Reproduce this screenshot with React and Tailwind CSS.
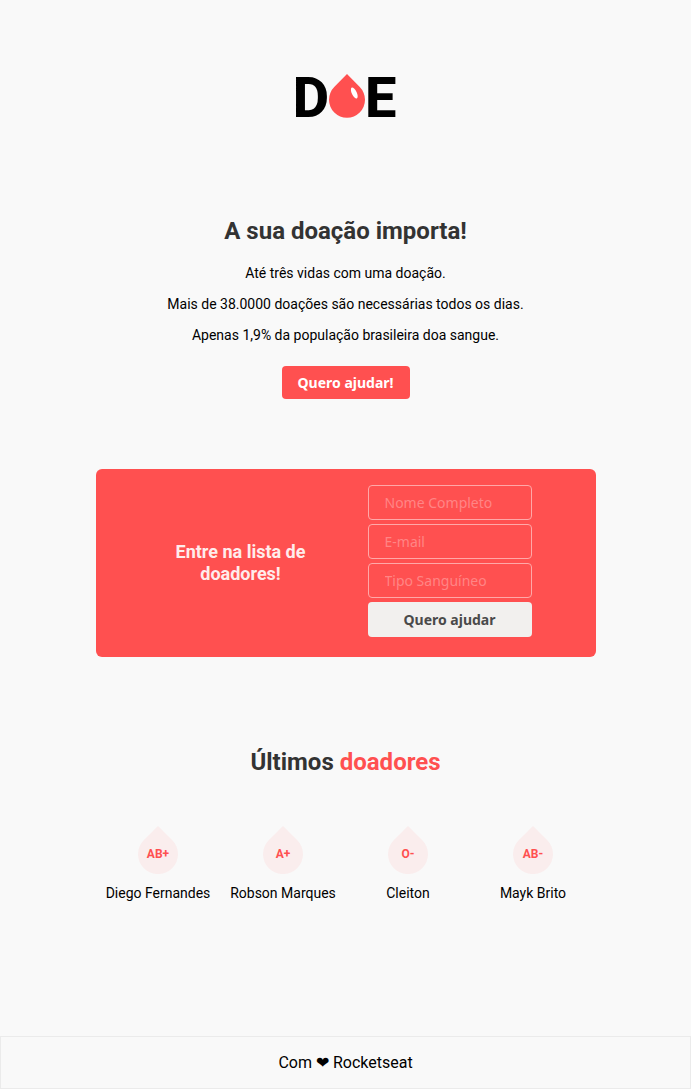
const donors = [
  { name: 'Diego Fernandes', blood: 'AB+' },
  { name: 'Robson Marques', blood: 'A+' },
  { name: 'Cleiton', blood: 'O-' },
  { name: 'Mayk Brito', blood: 'AB-' },
];

const fields = [
  { name: 'name', type: 'text', label: 'Nome Completo' },
  { name: 'email', type: 'email', label: 'E-mail' },
  { name: 'blood', type: 'text', label: 'Tipo Sanguíneo' },
];

function Logo() {
  return (
    <div className="flex items-end justify-center pr-0.5 text-[56px] leading-[68px] font-extrabold text-black">
      <span>D</span>
      <svg className="mb-3.5 h-11 w-9" viewBox="0 0 36 44" aria-label="O" role="img">
        <path
          d="M18 0 L30.8 13.1 A18 18 0 1 1 5.2 13.1 Z"
          fill="#ff5050"
        />
        <ellipse cx="25.3" cy="19" rx="2.5" ry="6" transform="rotate(-25 25.3 19)" fill="#fff" />
      </svg>
      <span>E</span>
    </div>
  );
}

function Donor({ name, blood }) {
  return (
    <li className="flex flex-col items-center gap-[11px]">
      <div className="grid h-12 w-10 place-items-center">
        <svg className="col-start-1 row-start-1 h-12 w-10" viewBox="0 0 40 48" aria-hidden="true">
          <path d="M20 0 L34.1 13.9 A20 20 0 1 1 5.9 13.9 Z" fill="#faeded" />
        </svg>
        <span className="col-start-1 row-start-1 pt-2 text-xs font-bold text-[#ff5050]">{blood}</span>
      </div>
      <p className="text-sm leading-4 whitespace-nowrap">{name}</p>
    </li>
  );
}

export default function App() {
  return (
    <div className="flex min-h-screen flex-col bg-[#f9f9f9] font-[Roboto,sans-serif] text-black">
      <header className="pt-16">
        <Logo />
      </header>

      <main className="mx-auto flex w-full max-w-[500px] grow flex-col">
        <section className="mt-[85px] flex flex-col items-center text-center">
          <h1 className="text-2xl leading-7 font-bold text-[#333]">A sua doação importa!</h1>
          <div className="mt-5 flex flex-col gap-[15px] text-sm leading-4">
            <p>Até três vidas com uma doação.</p>
            <p>Mais de 38.0000 doações são necessárias todos os dias.</p>
            <p>Apenas 1,9% da população brasileira doa sangue.</p>
          </div>
          <button
            type="button"
            className="mt-[23px] rounded bg-[#ff5050] px-4 py-2 font-['Noto_Sans',sans-serif] text-sm leading-[17px] font-bold text-white"
          >
            Quero ajudar!
          </button>
        </section>

        <section className="mt-[70px] flex flex-wrap items-center justify-between gap-4 rounded-md bg-[#ff5050] px-16 py-4">
          <h2 className="w-[162px] text-center text-lg leading-[22px] font-bold text-[#ffecec]">
            Entre na lista de doadores!
          </h2>
          <form className="flex w-[164px] flex-col gap-1 pb-1 font-['Noto_Sans',sans-serif]" onSubmit={(e) => e.preventDefault()}>
            {fields.map((f) => (
              <input
                key={f.name}
                type={f.type}
                name={f.name}
                aria-label={f.label}
                placeholder={f.label}
                className="h-[35px] w-full rounded border border-[#ffa8a8] bg-transparent px-4 text-sm text-white placeholder:text-[#ff8585]"
              />
            ))}
            <button type="submit" className="h-[35px] rounded bg-[#f2f0ee] text-sm font-bold text-[#4a4a4a]">
              Quero ajudar
            </button>
          </form>
        </section>

        <section className="mt-[91px] pb-[132px]">
          <h2 className="text-center text-2xl leading-7 font-bold text-[#333]">
            Últimos <span className="text-[#ff5050]">doadores</span>
          </h2>
          <ul className="mt-[50px] grid grid-cols-4">
            {donors.map((d) => (
              <Donor key={d.name} {...d} />
            ))}
          </ul>
        </section>
      </main>

      <footer className="border border-[#ebebeb] py-4 text-center text-base leading-[19px]">
        <p>Com ❤︎ Rocketseat</p>
      </footer>
    </div>
  );
}
